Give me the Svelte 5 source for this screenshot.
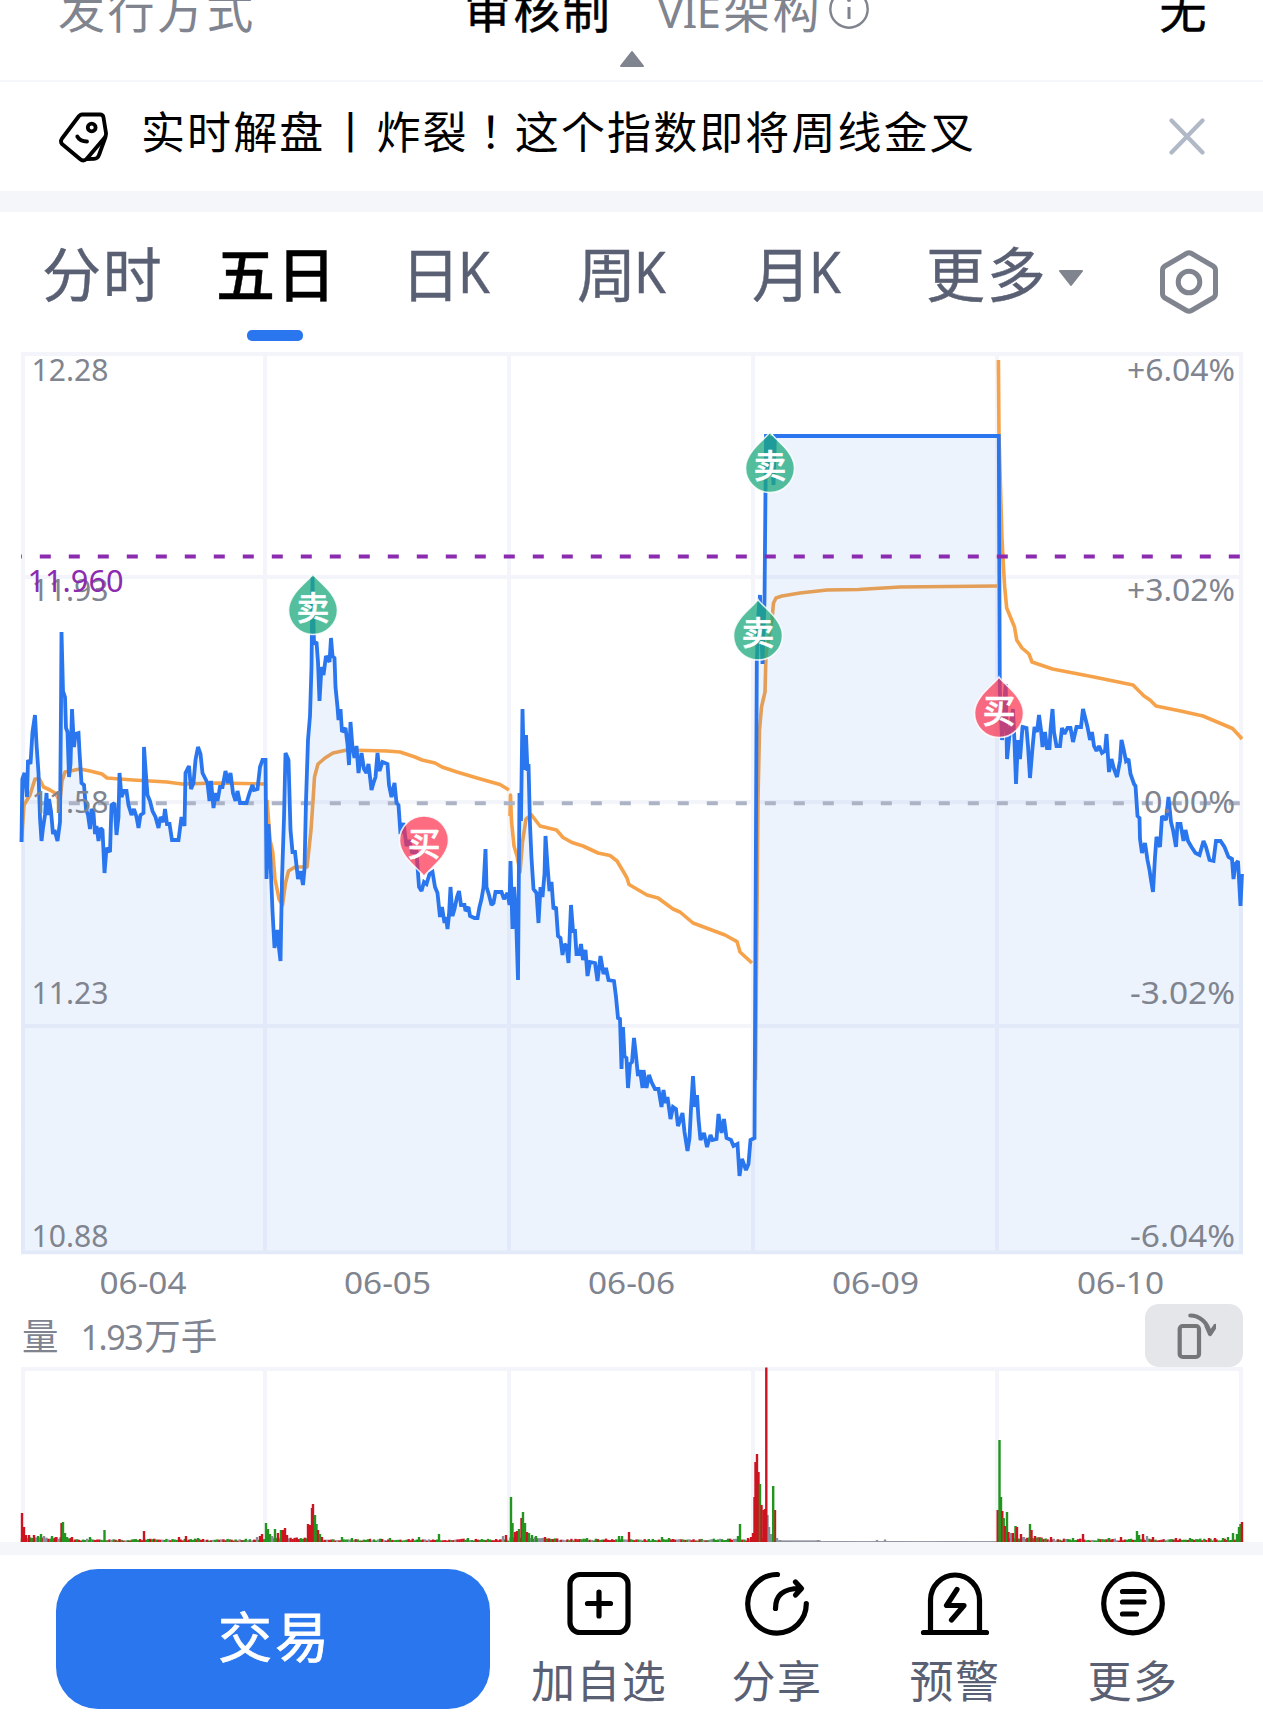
<script>
    const tabs = [
        { name: '分时' },
        { name: '五日', active: true },
        { name: '日', k: true },
        { name: '周', k: true },
        { name: '月', k: true },
        { name: '更多', arrow: true }
    ];

    const gridX = [23, 265, 509, 753, 997, 1241];
    const gridY = [354, 577, 802, 1026, 1252.5];

    const leftLabels = [
        { text: '12.28', y: 381 },
        { text: '11.93', y: 600.5 },
        { text: '11.58', y: 812.5 },
        { text: '11.23', y: 1004 },
        { text: '10.88', y: 1246.5 }
    ];

    const rightLabels = [
        { text: '+6.04%', y: 381, w: 108 },
        { text: '+3.02%', y: 601, w: 108 },
        { text: '0.00%', y: 812.5, w: 91 },
        { text: '-3.02%', y: 1004, w: 105 },
        { text: '-6.04%', y: 1246.5, w: 105 }
    ];

    const dates = [
        { text: '06-04', x: 143 },
        { text: '06-05', x: 387.5 },
        { text: '06-06', x: 631.5 },
        { text: '06-09', x: 875.5 },
        { text: '06-10', x: 1120.5 }
    ];

    const markers = [
        { type: 'sell', x: 313, y: 574 },
        { type: 'buy', x: 424, y: 876.5, flip: true },
        { type: 'sell', x: 758, y: 599.5 },
        { type: 'sell', x: 770, y: 432 },
        { type: 'buy', x: 999, y: 677 }
    ];

    const price = [
        '21.5,842 22.3,779 24.5,773 27,797 28,760 30.5,764 32.5,732 35,715 36.5,744 38.5,773 40,818 41.5,841 43,828 45,815 46.5,793 47.5,815 49,799 51,811 53,834 54.5,830 57.5,841 60,822 61,707 61.5,632 63,691 65,697 66,728 67.5,732 69,777 70.5,764 72,709 74,747 75.5,734 78.5,733 79.5,752 81.5,783 84,785 86,809 88,815 90,829 91.5,809 93.5,813 95,834 96.5,826 98.5,841 100.5,828 102.5,830 104.5,873 106.5,848 110,852 111.5,805 114.5,803 116.5,835 118.5,817 119.5,773 121.5,797 124,791 126.5,791 128.5,805 131.5,815 134,809 136.5,817 138.5,828 140.5,815 143.5,813 144,747 145.5,769 147.5,795 150,801 152.5,811 155.5,817 158.5,828 160.5,817 163.5,822 165,809 167,824 169.5,824 172,840 178.5,840 181.5,817 184.5,826 185.5,773 189,766 191,789 193.5,783 195.5,760 198,747 200.5,754 202.5,773 205.5,779 207.5,783 209.5,801 211,781 213.5,808 215.5,793 217.5,801 220,787 222.5,787 225.5,771 228,783 230.5,773 233,793 235.5,801 237.5,791 240,803 246.5,803 249.5,793 252.5,785 254,790 257.5,789 260,767 262.5,760 265.5,760',
        '266.5,879 268.5,824 270.5,862 272.5,911 274.5,948 277.5,930 279,948 280.5,961 282,879 284,818 285.5,753 288.5,760 290.5,830 292.5,852 295,852 298,879 300.5,871 303,885 304.5,869 306,801 308,740 310,716 311.5,667 312.5,577 314,644 316.5,642 318,662 319.5,701 321.5,667 323.5,675 326,656 329.5,662 331,638 332.5,656 334.5,658 335.5,687 337.5,707 338.5,720 340.5,709 342,732 345.5,728 347.5,744 349,765 350.5,722 352.5,748 354.5,758 356.5,746 358.5,773 361.5,753 364,769 366.5,773 368.5,764 371.5,790 373.5,783 375.5,777 377.5,753 379.5,771 382.5,762 387.5,764 389,785 391.5,797 394.5,783 396.5,803 398.5,805 400.5,834 403.5,823 406.5,846 409,840 412,852 416.5,852 419,887 421.5,891 424,882 426.5,884 429.5,874 432.5,872 435,887 437.5,893 440,917 442,907 444.5,923 446,917 447.5,929 449,915 450.5,887 452.5,916 454.5,909 457,897 459,891 461,905 464.5,905 465.5,911 468.5,907 470,916 474.5,918 477.5,918 479.5,907 481.5,899 483.5,887 485.5,849 486.5,887 489,895 491.5,905 493.5,903 495.5,892 501.5,892 504,899 507.5,893 509.5,905',
        '510.5,861 512.5,929 514,887 516,915 518,980 519.5,793 521,821 522.5,709 524,770 526,735 527.5,771 528.5,764 530,825 531.5,858 533.5,889 536.5,893 538.5,923 540.5,887 542.5,897 544.5,874 545.5,836 547.5,866 549.5,891 551.5,882 553.5,909 556,907 558,936 560.5,938 562.5,955 564.5,944 566.5,946 568.5,963 571,905 573,931 575,931 576.5,954 579,954 581,944 583,960 585.5,950 587.5,976 590,962 595,963 597.5,981 600.5,956 603.5,974 606,968 608.5,980 614,981 616,997 618,1018 620,1019 621.5,1069 623,1027 624.5,1056 626.5,1058 628,1088 630,1064 632,1062 634,1038 636,1056 638,1076 640,1070 642.5,1088 643.5,1070 646.5,1088 649,1075 651.5,1082 655,1089 658.5,1089 661.5,1107 663.5,1090 665.5,1103 667.5,1097 670.5,1119 673,1107 676,1109 678,1126 680.5,1119 682.5,1113 684.5,1132 687.5,1151 689.5,1138 691,1109 693,1076 695,1107 697,1095 698.5,1119 700.5,1140 704,1133 707,1147 710.5,1135 712.5,1140 716.5,1139 718.5,1114 721.5,1133 724,1119 726.5,1138 731,1140 733.5,1146 737.5,1144 739.5,1176 742,1159 746,1170 748.5,1164 750.5,1140 754.5,1138',
        '756.8,662 758.5,612 760,595 762.5,664 764.5,600 766,436 768,436 770,470 771,436 773.5,485 775,436 998.8,436',
        '999.8,690 1002,740 1005.7,684 1007,759 1010,730 1013,709 1014.5,742 1016,784 1018,740 1020,759 1022.5,727 1026.5,728 1028,746 1030,778 1032.5,748 1034.5,727 1037,732 1039,715 1041,730 1042.5,747 1045,732 1047,748 1049.5,748 1050.5,730 1052.5,709 1054,732 1056.5,746 1060,746 1062,728 1064.5,734 1067.5,728 1070.5,728 1073,742 1076.5,727 1081,727 1083,709 1085.5,719 1087.5,727 1090,740 1092,732 1094,746 1096.5,751 1099,746 1102,753 1105,751 1106.5,734 1108,757 1109,772 1111.5,759 1114,769 1117,777 1120,761 1121.5,740 1124,751 1126,761 1128.5,759 1130.5,774 1134,784 1135.5,786 1137.5,816 1139.5,818 1140,839 1142,853 1145,843 1147.5,860 1149.5,870 1151,880 1153,892 1155,857 1156.5,837 1160,847 1162,816 1166,820 1168.5,797 1171,822 1173,830 1176,847 1177.5,824 1180.5,824 1183.5,841 1185.5,830 1188,841 1191.5,847 1195.5,853 1199.5,855 1203.5,841 1206,847 1209.5,860 1213.5,861 1216,841 1220.5,841 1224.5,847 1228.5,857 1232,859 1233.5,879 1235.5,864 1238,861 1240.5,906 1242,874'
    ].join(' ');

    const average = [
        '21.5,842 24,805 30,795 35,779 39.5,779 43.5,787 50,790 55,793 60,801 62,781 65,772 80,769 90,771 102,774 107,778 133,780 167,782 182,784 217,783 265,784',
        '267,800 270,840 272.7,852 275,879 279,899 282.5,905 285.5,883 288.5,871 295,867 307,867 311,830 313,801 314.5,777 318,764 325,758 333,753 347,750 387,751 400,752 415,757 422,760 435,763 442,767 457,772 477,778 500,784.5 509,790',
        '510,816 510.5,795 511.5,821 514,846 517,856 520,872 522.5,842 526,819 531.5,815 540,826 556.5,830 563,837.5 572,842.5 583,846 598,853 610,855.5 617,861 623,871 627,878 629,884.5 647,895 658,898 673,909 680,912 693,923 713,930.5 725,935 737,941.6 740,952 752,963',
        '755.5,1080 758,799 759.5,730 761.5,707 765,692 766,654 772,619 773.5,603 776,598 782,596 800,593 827,590 858.5,589.5 900,587 997,586',
        '998.4,360 999,436 1002,539 1004.5,585 1006.7,608 1014.5,627 1016.7,640 1022,648 1029,654 1032,662 1052.5,669 1094,677 1111,680.5 1133,685 1144,696 1150,700 1156,706 1180.5,711 1203,716 1232.5,728.5 1239.5,736 1242,739'
    ];

    const RED = '#cc1420';
    const GREEN = '#22941f';
    const GRAY = '#8b8f9b';
    const colors = { r: RED, g: GREEN, n: GRAY };

    // x, height, colour
    const peaks = [
        [22, 29, 'r'], [24, 15, 'r'], [26, 7, 'r'], [29, 7, 'r'], [34, 7, 'r'], [38, 6, 'g'], [41, 8, 'g'], [44, 6, 'n'], [52, 6, 'g'], [56, 5, 'r'],
        [61.5, 19, 'r'], [63, 20, 'g'], [65, 9, 'g'], [67, 5, 'g'], [72, 5, 'r'], [90, 5, 'g'], [104.5, 12, 'g'], [119.5, 3, 'r'], [144, 11, 'r'],
        [179, 5, 'r'], [186, 6, 'r'], [198, 4, 'g'], [257, 5, 'n'], [260, 6, 'r'], [262, 8, 'r'], [266, 19, 'g'], [268, 13, 'g'], [270, 8, 'g'],
        [272, 6, 'n'], [275, 13, 'g'], [278, 9, 'r'], [281, 12, 'g'], [283, 12, 'r'], [285, 14, 'r'], [287, 7, 'r'], [308, 18, 'r'], [310, 17, 'r'],
        [312, 34, 'r'], [313, 38, 'r'], [315, 27, 'g'], [316.5, 18, 'g'], [318, 12, 'r'], [320, 8, 'g'], [322, 5, 'r'], [342, 5, 'g'], [352, 4, 'g'],
        [390, 4, 'g'], [419, 5, 'g'], [439, 8, 'g'], [468, 4, 'g'], [503, 6, 'n'], [506, 7, 'r'], [511, 45, 'g'], [512.5, 19, 'g'], [515, 10, 'r'],
        [517, 11, 'r'], [519, 13, 'g'], [521.5, 24, 'r'], [523, 30, 'g'], [525, 19, 'g'], [527, 10, 'r'], [529, 9, 'g'], [532, 7, 'g'], [536, 6, 'g'],
        [545, 5, 'r'], [587, 4, 'g'], [619, 6, 'g'], [622, 6, 'g'], [629, 10, 'r'], [662, 5, 'g'], [669, 4, 'g'], [738, 6, 'g'], [740, 18, 'g'],
        [748, 4, 'r'], [751, 5, 'r'], [753, 9, 'r'], [754.5, 45, 'r'], [755.5, 80, 'r'], [757, 88, 'r'], [758.5, 70, 'r'], [760, 58, 'g'],
        [761.5, 37, 'r'], [763.5, 32, 'r'], [765, 33, 'r'], [767.5, 27, 'n'], [766.3, 174.5, 'r'], [769, 15, 'n'], [771, 8, 'n'], [775, 32, 'r'],
        [773.2, 56, 'g'], [777, 4, 'n'], [780, 2, 'n'], [818, 2, 'n'], [877, 2, 'n'], [885, 2.5, 'n'], [997.7, 32, 'r'], [1001, 45, 'g'],
        [999.5, 102, 'g'], [1002.3, 31, 'r'], [1003.7, 24, 'g'], [1005, 16, 'r'], [1007, 30, 'g'], [1008.5, 10, 'r'], [1011, 9, 'n'], [1013, 9, 'r'],
        [1015.5, 16, 'g'], [1017, 15, 'r'], [1021, 8, 'r'], [1024, 5, 'n'], [1030, 18, 'g'], [1031.5, 12, 'r'], [1035, 6, 'r'], [1041, 4, 'g'],
        [1051, 5, 'r'], [1073, 4, 'g'], [1083, 8, 'r'], [1109, 4, 'g'], [1121, 5, 'r'], [1137, 11, 'g'], [1139, 7, 'g'], [1143, 8, 'r'],
        [1147, 6, 'n'], [1153, 5, 'r'], [1176, 4, 'r'], [1190, 4, 'g'], [1209, 4, 'r'], [1215, 4, 'r'], [1223, 4, 'g'], [1228, 5, 'g'],
        [1233, 9, 'g'], [1237, 8, 'g'], [1239, 15, 'g'], [1240.5, 18, 'g'], [1242, 20, 'r']
    ];

    function quietBars() {
        const list = [];
        let seed = 7;
        for (let i = 0; i < 600; i++) {
            seed = (seed * 1103515245 + 12345) % 2147483648;
            const rnd = seed / 2147483648;
            const x = 22 + i * 2.035;
            if (x > 776 && x < 997) {
                list.push([x, x < 820 ? 1.6 : 0.9, 'n']);
                continue;
            }
            const kind = rnd < 0.38 ? 'r' : rnd < 0.82 ? 'g' : 'n';
            const busy = (x - 21) % 244 < 50 ? 1.5 : 0;
            list.push([x, 1.4 + ((rnd * 37) % 1) * 2 + busy, kind]);
        }
        return list;
    }

    const bars = [...quietBars(), ...peaks];
</script>

<div class="page">
    <div class="info-row">
        <span class="label issue">发行方式</span>
        <span class="value">审核制</span>
        <span class="label vie"><span class="latin">VIE</span>架构</span>
        <svg class="tip" width="42" height="42" viewBox="0 0 42 42">
            <circle cx="21" cy="21" r="18.7" fill="none" stroke="#80848f" stroke-width="2.4" />
            <path d="M21 19v12" stroke="#80848f" stroke-width="3" />
            <circle cx="21" cy="12" r="2" fill="#80848f" />
        </svg>
        <span class="value none">无</span>
    </div>
    <div class="collapse">
        <svg width="26" height="18" viewBox="0 0 26 18">
            <path d="M13 2L24 16H2Z" fill="#80848f" stroke="#80848f" stroke-width="2" stroke-linejoin="round" />
        </svg>
    </div>

    <div class="news">
        <svg class="tag" width="54" height="54" viewBox="0 0 54 54" fill="none" stroke="#000" stroke-width="3.8" stroke-linejoin="round" stroke-linecap="round">
            <path d="M25 4.500H43Q46 4.500 46.500 7.500L49 23Q49.300 25.500 47.800 27.500L30 48.500Q26.500 52 23 49L5 34Q3 31.500 5 28.500L22 6Q23.500 4.500 25 4.500Z" />
            <path d="M48.500 27L42 45Q40.800 48.800 37 48.900L30 49" />
            <circle cx="34.700" cy="17.500" r="3.900" />
            <path d="M20.300 26.500Q23 31.500 30 31.500" />
        </svg>
        <span class="news-text">实时解盘<span class="sep">丨</span>炸裂<span class="mark">！</span>这个指数即将周线金叉</span>
        <svg width="38" height="38" viewBox="0 0 38 38">
            <path d="M3.500 2.500L34.500 34.500M34.500 2.500L3.500 34.500" stroke="#b1b8c6" stroke-width="4.200" stroke-linecap="round" />
        </svg>
    </div>

    <div class="band"></div>

    <div class="tabs">
        {#each tabs as tab}
            <div class="tab" class:active={tab.active}>
                <span>{tab.name}</span>
                {#if tab.k}<span class="k">K</span>{/if}
                {#if tab.arrow}
                    <svg class="arrow" width="26" height="18" viewBox="0 0 26 18">
                        <path d="M2 2H24L13 16Z" fill="#80848f" stroke="#80848f" stroke-width="2" stroke-linejoin="round" />
                    </svg>
                {/if}
            </div>
        {/each}
        <svg class="setting" width="64" height="68" viewBox="0 0 64 68" fill="none" stroke="#80848f" stroke-width="5" stroke-linejoin="round">
            <path d="M29.500 5.500Q32 4 34.500 5.500L56 18Q58.500 19.500 58.500 22.500V45.500Q58.500 48.500 56 50L34.500 62.500Q32 64 29.500 62.500L8 50Q5.500 48.500 5.500 45.500V22.500Q5.500 19.500 8 18Z" />
            <circle cx="32" cy="34" r="10.800" />
        </svg>
    </div>

    <svg class="chart" width="1263" height="959" viewBox="0 345 1263 959">
        <g stroke="#f4f5fa" stroke-width="4">
            {#each gridY as y}
                <line x1="21" x2="1243" y1={y} y2={y} />
            {/each}
            {#each gridX as x}
                <line x1={x} x2={x} y1="352" y2="1254" />
            {/each}
        </g>
        {#each average as points}
            <polyline {points} fill="none" stroke="#f6a24a" stroke-width="3.6" stroke-linejoin="round" />
        {/each}
        <polygon points={`21,1254 ${price} 1243,874 1243,1254`} fill="#2a76ee" fill-opacity="0.09" />
        <line class="dash" x1="21" x2="1243" y1="803.3" y2="803.3" stroke="#abb3c4" stroke-width="4" />
        <polyline points={price} fill="none" stroke="#2a76ee" stroke-width="3.8" stroke-linejoin="miter" stroke-miterlimit="2" />
        <line class="dash" x1="21" x2="1243" y1="556.5" y2="556.5" stroke="#8a2bb0" stroke-width="4" />

        <g class="axis">
            {#each leftLabels as l}
                <text x="31.5" y={l.y} textLength="77" lengthAdjust="spacingAndGlyphs">{l.text}</text>
            {/each}
            {#each rightLabels as l}
                <text x={1235 - l.w} y={l.y} textLength={l.w} lengthAdjust="spacingAndGlyphs">{l.text}</text>
            {/each}
            {#each dates as d}
                <text x={d.x - 43.5} y="1293.5" textLength="87" lengthAdjust="spacingAndGlyphs">{d.text}</text>
            {/each}
            <text class="cost" x="27.5" y="592" textLength="96" lengthAdjust="spacingAndGlyphs">11.960</text>
        </g>

        {#each markers as m}
            <g transform={`translate(${m.x} ${m.y})`}>
                <path
                    class={m.type}
                    transform={m.flip ? 'scale(1 -1)' : undefined}
                    d="M0 0C3 6 24.500 19 24.500 36A24.500 24.500 0 0 1 -24.500 36C-24.500 19 -3 6 0 0Z"
                />
                <text class="mark-text" x="0" y={m.flip ? -21 : 45.5}>{m.type === 'sell' ? '卖' : '买'}</text>
            </g>
        {/each}
    </svg>

    <div class="volume-head">
        <div class="volume-text">量<span class="num">1.93</span>万手</div>
        <div class="rotate">
            <svg width="44" height="60" viewBox="0 0 44 60" fill="none" stroke="#747678" stroke-width="4.2" stroke-linecap="round" stroke-linejoin="round">
                <rect x="7.700" y="20" width="19.300" height="31" rx="3" />
                <path d="M18.300 9.500C27 9.500 36 16 38 28L43.300 20M38 28L34.500 20" />
            </svg>
        </div>
    </div>

    <svg class="volume" width="1263" height="175" viewBox="0 1367 1263 175">
        <g stroke="#f4f5fa" stroke-width="4">
            <line x1="21" x2="1243" y1="1369" y2="1369" />
            {#each gridX as x}
                <line x1={x} x2={x} y1="1367" y2="1542" />
            {/each}
        </g>
        {#each bars as [x, h, c]}
            <rect x={x - 1.2} y={1542 - h} width="2.4" height={h} fill={colors[c]} />
        {/each}
    </svg>

    <div class="footer">
        <button class="trade">交易</button>
        <div class="actions">
            <div class="action">
                <svg width="70" height="66" viewBox="0 0 70 66">
                    <rect x="6" y="4.500" width="58" height="58" rx="10" />
                    <path d="M35 22V46M23.500 33.500H46.500" />
                </svg>
                <span>加自选</span>
            </div>
            <div class="action">
                <svg width="70" height="66" viewBox="0 0 70 66">
                    <path d="M35.500 4.500A29.300 29.300 0 1 0 64.300 33.500" />
                    <path d="M33.500 38.500C33.500 25 41 18.500 58 18.500M53.500 12L59.500 18.500L53.500 25" />
                </svg>
                <span>分享</span>
            </div>
            <div class="action">
                <svg width="70" height="66" viewBox="0 0 70 66">
                    <path d="M10.500 62V30A24.500 25 0 0 1 59.500 30V62M3.500 62.500H66.500" />
                    <path d="M37 19.500L26.500 35.500H44L31.500 50" />
                </svg>
                <span>预警</span>
            </div>
            <div class="action">
                <svg width="70" height="66" viewBox="0 0 70 66">
                    <circle cx="35" cy="33.500" r="29.300" />
                    <path d="M24.500 21.500H46M24.500 32H46M24.500 44H38.500" />
                </svg>
                <span>更多</span>
            </div>
        </div>
    </div>
</div>

<style>
    :global(body) {
        margin: 0;
        background: #fff;
    }
    .page {
        width: 1263px;
        height: 1727px;
        overflow: hidden;
        background: #fff;
        font-family: "Noto Sans CJK SC", sans-serif;
        color: #000;
    }
    svg {
        display: block;
        flex-shrink: 0;
    }
    .info-row {
        display: flex;
        align-items: center;
        height: 60px;
        margin-top: -23px;
        padding-left: 58px;
        font-size: 47px;
        letter-spacing: 2.4px;
        white-space: nowrap;
    }
    .label {
        color: #80848f;
    }
    .value {
        -webkit-text-stroke: 0.5px #000;
    }
    .issue {
        width: 406px;
    }
    .vie {
        margin-left: 45px;
    }
    .latin {
        display: inline-block;
        width: 66px;
        font-family: "Noto Sans", sans-serif;
        font-size: 44px;
        letter-spacing: -1px;
    }
    .tip {
        margin: 4px 0 0 6px;
    }
    .none {
        margin-left: auto;
        margin-right: 54px;
    }
    .collapse {
        display: flex;
        justify-content: center;
        height: 30px;
        padding-top: 13px;
        border-bottom: 2px solid #f5f6fa;
    }
    .news {
        display: flex;
        align-items: center;
        height: 109px;
        padding: 0 57px;
    }
    .news-text {
        flex: 1;
        margin: -14px 0 0 30px;
        font-size: 44px;
        letter-spacing: 2.1px;
        white-space: nowrap;
    }
    .sep {
        margin: 0 2px 0 3px;
    }
    .mark {
        font-family: "Noto Sans CJK TC", sans-serif;
    }
    .band {
        height: 21px;
        background: #f4f6fa;
    }
    .tabs {
        display: grid;
        grid-template-columns: 174px 185px 176px 175px 174px 226px auto;
        height: 133px;
        padding-left: 42px;
        color: #5a6073;
        font-size: 59px;
    }
    .tab {
        display: flex;
        align-items: center;
        position: relative;
        height: 118px;
        letter-spacing: 1.8px;
        white-space: nowrap;
        -webkit-text-stroke: 0.4px;
    }
    .k {
        font-family: "Noto Sans", sans-serif;
        font-size: 56px;
        margin-left: -4px;
        transform: scaleX(0.92);
        transform-origin: left;
    }
    .active {
        color: #000;
        font-weight: 500;
    }
    .active::after {
        content: "";
        position: absolute;
        left: 31px;
        top: 118px;
        width: 56px;
        height: 11px;
        border-radius: 5px;
        background: #2a76ee;
    }
    .arrow {
        margin: 14px 0 0 10px;
    }
    .setting {
        margin: 36px 0 0 5px;
    }
    .dash {
        stroke-dasharray: 11 18;
        stroke-dashoffset: 10.2;
    }
    .axis text {
        font-family: "Noto Sans", sans-serif;
        font-size: 31.5px;
        fill: #80848f;
    }
    .axis .cost {
        fill: #8a2bb0;
    }
    .sell {
        fill: rgba(28, 170, 124, 0.75);
        stroke: rgba(255, 255, 255, 0.85);
        stroke-width: 1.6px;
    }
    .buy {
        fill: rgba(252, 45, 76, 0.7);
        stroke: rgba(255, 255, 255, 0.85);
        stroke-width: 1.6px;
    }
    .mark-text {
        font-size: 33px;
        font-weight: 500;
        fill: #fff;
        stroke: #fff;
        stroke-width: 0.5px;
        text-anchor: middle;
    }
    .volume-head {
        display: flex;
        align-items: center;
        justify-content: space-between;
        height: 63px;
        padding: 0 20px 0 22px;
        color: #80848f;
        font-size: 36.5px;
    }
    .volume-text {
        margin-top: -2px;
    }
    .num {
        margin: 0 2px 0 22px;
        font-family: "Noto Sans", sans-serif;
        font-size: 34px;
        letter-spacing: -1.4px;
    }
    .rotate {
        display: flex;
        align-items: center;
        justify-content: center;
        width: 98px;
        height: 63px;
        border-radius: 14px;
        background: #e4e6ea;
    }
    .footer {
        display: flex;
        align-items: flex-start;
        height: 172px;
        border-top: 13px solid #f4f6fa;
        padding-left: 56px;
    }
    .trade {
        width: 434px;
        height: 140px;
        margin-top: 14px;
        padding: 0 0 9px 4px;
        border: none;
        border-radius: 42px;
        background: #2a76ee;
        color: #fff;
        font-family: inherit;
        font-size: 54px;
        letter-spacing: 3px;
        -webkit-text-stroke: 0.8px #fff;
    }
    .actions {
        display: flex;
        margin-left: 20px;
    }
    .action {
        display: flex;
        flex-direction: column;
        align-items: center;
        width: 178px;
        padding-top: 15px;
        color: #5a6073;
        font-size: 44px;
        letter-spacing: 1.4px;
        line-height: 64px;
        white-space: nowrap;
    }
    .action svg {
        margin-bottom: 11px;
        fill: none;
        stroke: #000;
        stroke-width: 5.2px;
        stroke-linecap: round;
        stroke-linejoin: round;
    }
</style>
